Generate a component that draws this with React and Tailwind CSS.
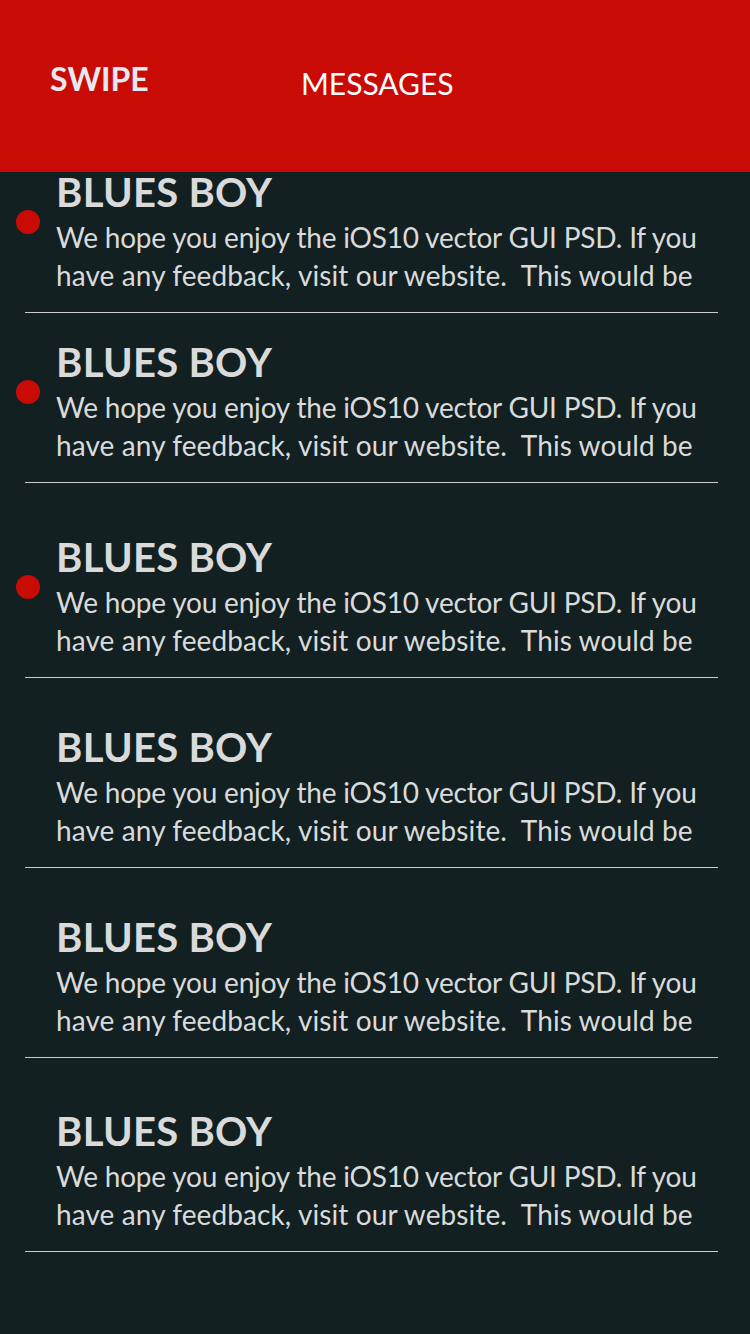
const rows = [
  { pt: 'pt-0', dot: true },
  { pt: 'pt-[29px]', dot: true },
  { pt: 'pt-[54px]', dot: true },
  { pt: 'pt-[49px]', dot: false },
  { pt: 'pt-[49px]', dot: false },
  { pt: 'pt-[53px]', dot: false },
]

function MessageRow({ pt, dot }) {
  return (
    <div>
      <div className={`flex ${pt} pb-[18px]`}>
        <div className="w-[56px] shrink-0">
          {dot && <div className="ml-4 mt-[38px] h-6 w-6 rounded-full bg-[#c80b05]" />}
        </div>
        <div className="text-[#dadada]">
          <h2 className="text-[40px] font-bold leading-[40px] tracking-[0.3px]">BLUES BOY</h2>
          <p className="mt-[6px] whitespace-nowrap text-[28px] leading-[38px]">
            <span className="block tracking-[-0.2px]">We hope you enjoy the iOS10 vector GUI PSD. If you</span>
            <span className="block tracking-[0.1px]">have any feedback, visit our website.&nbsp; This would be</span>
          </p>
        </div>
      </div>
      <div className="ml-[25px] h-px w-[693px] bg-[#c9cccc]" />
    </div>
  )
}

export default function App() {
  return (
    <div className="min-h-[1334px] w-[750px] overflow-hidden bg-[#122022] font-['Lato','Liberation_Sans',sans-serif]">
      <header className="flex h-[172px] items-start bg-[#c80b05] pl-[50px]">
        <div className="w-[251px] shrink-0">
          <span className="mt-[62px] block text-[32px] font-bold leading-[33px] text-[#e8e8ef]">SWIPE</span>
        </div>
        <span className="mt-[67px] block text-[30px] leading-[32px] text-white">MESSAGES</span>
      </header>
      <main>
        {rows.map((r, i) => (
          <MessageRow key={i} pt={r.pt} dot={r.dot} />
        ))}
      </main>
    </div>
  )
}
